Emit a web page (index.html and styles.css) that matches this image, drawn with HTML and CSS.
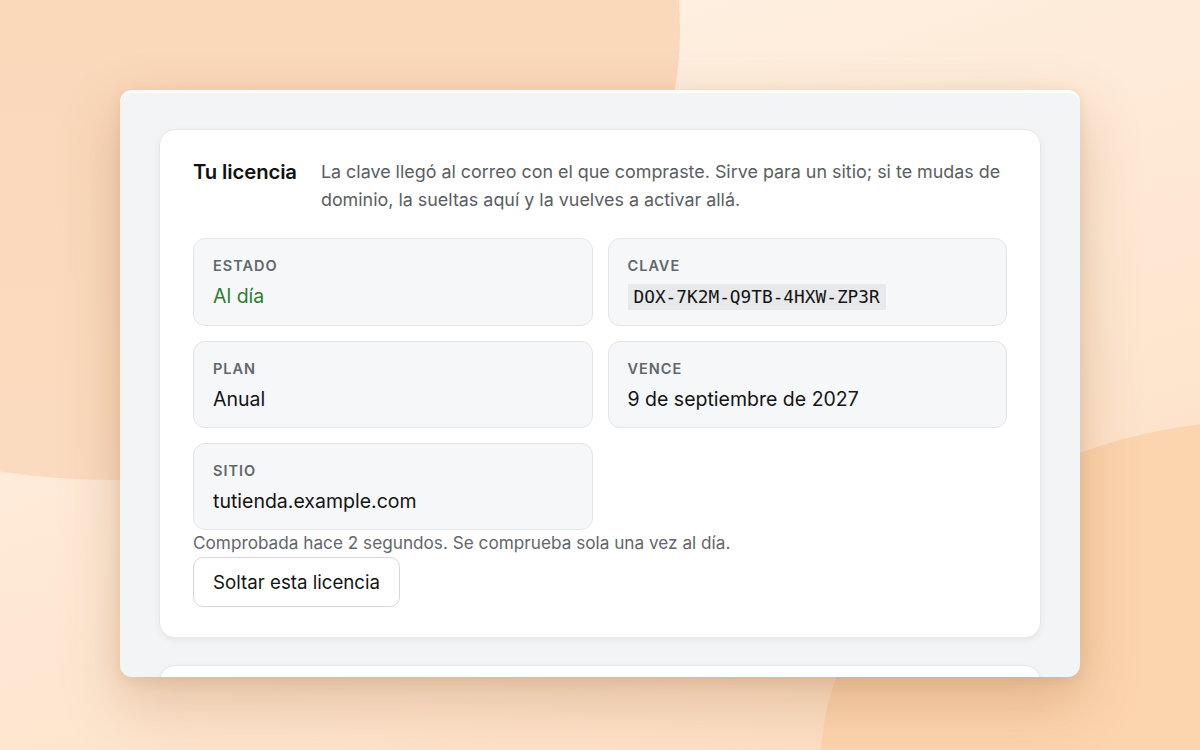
FILE: index.html
```html
<!DOCTYPE html>
<html lang="es">
<head>
<meta charset="utf-8">
<title>Tu licencia</title>
<link rel="stylesheet" href="styles.css">
</head>
<body>
<div class="bg">
  <div class="blob blob-a"></div>
  <div class="blob blob-b"></div>
</div>
<main class="window">
  <section class="card">
    <header class="head">
      <h2 class="title">Tu licencia</h2>
      <p class="desc">La clave llegó al correo con el que compraste. Sirve para un sitio; si te mudas de dominio, la sueltas aquí y la vuelves a activar allá.</p>
    </header>
    <div class="fields">
      <div class="field">
        <div class="label">Estado</div>
        <div class="value ok">Al día</div>
      </div>
      <div class="field">
        <div class="label">Clave</div>
        <div class="value"><code class="key">DOX-7K2M-Q9TB-4HXW-ZP3R</code></div>
      </div>
      <div class="field">
        <div class="label">Plan</div>
        <div class="value">Anual</div>
      </div>
      <div class="field">
        <div class="label">Vence</div>
        <div class="value">9 de septiembre de 2027</div>
      </div>
      <div class="field">
        <div class="label">Sitio</div>
        <div class="value">tutienda.example.com</div>
      </div>
    </div>
    <p class="note">Comprobada hace 2 segundos. Se comprueba sola una vez al día.</p>
    <button class="btn" type="button">Soltar esta licencia</button>
  </section>
  <section class="card card-next"></section>
</main>
</body>
</html>
```

FILE: styles.css
```css
* { box-sizing: border-box; }
html, body { margin: 0; padding: 0; }
body {
  width: 1200px;
  height: 750px;
  overflow: hidden;
  position: relative;
  background: linear-gradient(160deg, #fff3e8 0%, #fee8d3 55%, #fddcbf 100%);
  font-family: Inter, "Noto Sans", sans-serif;
  color: #141414;
}
.bg { position: absolute; inset: 0; overflow: hidden; }
.blob { position: absolute; border-radius: 50%; }
.blob-a {
  width: 1140px; height: 900px;
  left: -460px; top: -420px;
  background: linear-gradient(180deg, #f9d5b6 0%, #fbdbbf 100%);
}
.blob-b {
  width: 900px; height: 700px;
  left: 820px; top: 420px;
  background: #fcd4ae;
}
.window {
  position: relative;
  width: 960px;
  height: 587px;
  margin: 90px auto 0;
  background: #f3f4f6;
  border-top: 3px solid #ffffff;
  border-radius: 12px;
  overflow: hidden;
  padding: 36px 39px 0;
  box-shadow: 0 24px 60px rgba(150, 90, 40, 0.28), 0 4px 14px rgba(150, 90, 40, 0.12);
}
.card {
  background: #ffffff;
  border: 1px solid #e6e8eb;
  border-radius: 16px;
  padding: 28px 33px 30px;
  box-shadow: 0 2px 6px rgba(0, 0, 0, 0.06);
}
.card-next { margin-top: 27px; height: 60px; padding: 0; }
.head {
  display: grid;
  grid-template-columns: auto 1fr;
  column-gap: 24px;
  align-items: start;
  margin-bottom: 24px;
}
.title {
  margin: 0;
  font-size: 20.3px;
  line-height: 28px;
  font-weight: 600;
  color: #111111;
  letter-spacing: -0.1px;
}
.desc {
  margin: 0;
  font-size: 17.9px;
  line-height: 28px;
  color: #5a5d62;
}
.fields {
  display: grid;
  grid-template-columns: 1fr 1fr;
  column-gap: 15px;
  row-gap: 15px;
}
.field {
  background: #f6f7f8;
  border: 1px solid #e3e5e8;
  border-radius: 12px;
  padding: 17px 19px 15px;
  min-height: 87px;
}
.label {
  font-size: 14.5px;
  line-height: 20px;
  font-weight: 600;
  letter-spacing: 1px;
  text-transform: uppercase;
  color: #63666b;
  margin-bottom: 7px;
}
.value {
  font-size: 19.5px;
  line-height: 26px;
  color: #141414;
}
.value.ok { color: #2e7d32; }
.key {
  display: inline-block;
  font-family: "DejaVu Sans Mono", "Liberation Mono", monospace;
  font-size: 17.8px;
  line-height: 26px;
  background: #e8e9eb;
  padding: 0 6px;
  color: #141414;
}
.note {
  margin: 1px 0 2px;
  font-size: 17.2px;
  line-height: 24px;
  color: #63666b;
}
.btn {
  height: 50px;
  padding: 0 19px;
  font-family: Inter, "Noto Sans", sans-serif;
  font-size: 18.7px;
  color: #141414;
  background: #ffffff;
  border: 1px solid #d3d6da;
  border-radius: 10px;
}
```
